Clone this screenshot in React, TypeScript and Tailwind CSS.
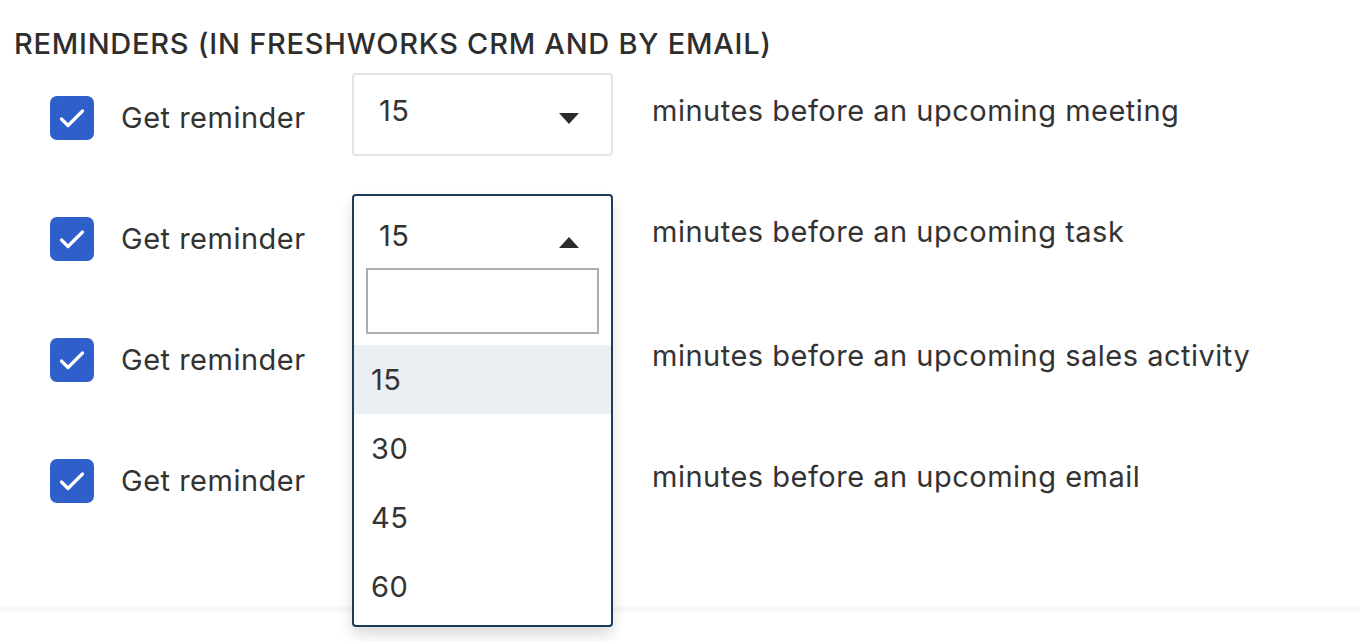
import React from 'react'

const rows = [
  { label: 'minutes before an upcoming meeting', open: false },
  { label: 'minutes before an upcoming task', open: true },
  { label: 'minutes before an upcoming sales activity', open: false },
  { label: 'minutes before an upcoming email', open: false },
]

const options = ['15', '30', '45', '60']

function Checkbox() {
  return (
    <div className="mt-[23px] flex h-[44px] w-[44px] shrink-0 items-center justify-center rounded-[7px] bg-[#2f5fcb]">
      <svg width="30" height="30" viewBox="0 0 30 30" fill="none">
        <path d="M4.5 16l6.5 6.5L25.5 8" stroke="#fff" strokeWidth="3.2" strokeLinecap="round" strokeLinejoin="round" />
      </svg>
    </div>
  )
}

function Caret({ up }: { up?: boolean }) {
  return (
    <svg width="20" height="12" viewBox="0 0 20 12" className="shrink-0">
      {up ? <path d="M0 12L10 1l10 11z" fill="#2b2b2b" /> : <path d="M0 0h20L10 11z" fill="#2b2b2b" />}
    </svg>
  )
}

function ClosedSelect() {
  return (
    <div className="flex h-[83px] w-[261px] shrink-0 items-start rounded-[4px] border-2 border-[#e4e4e4] bg-white pl-[25px] pr-[32px]">
      <span className="mt-[18px] flex-1 leading-[36px]">15</span>
      <div className="mt-[38px]">
        <Caret />
      </div>
    </div>
  )
}

function OpenSelect() {
  return (
    <div className="relative h-[83px] w-[261px] shrink-0">
      <div className="absolute left-0 top-0 z-10 w-[261px] overflow-hidden rounded-[4px] border-[2.5px] border-[#1d3b5b] bg-white shadow-[0_8px_14px_rgba(0,0,0,0.14)]">
        <div className="flex items-start pl-[25px] pr-[32px]">
          <span className="mt-[22px] flex-1 leading-[36px]">15</span>
          <div className="mt-[40px]">
            <Caret up />
          </div>
        </div>
        <div className="mx-[12px] mt-[14px] h-[66px] border-2 border-[#adadad] bg-white" />
        <div className="mt-[11px]">
          {options.map((o, i) => (
            <div
              key={o}
              className={`flex h-[69px] items-center pl-[17px] ${i === 0 ? 'bg-[#ebeef3]' : ''}`}
            >
              {o}
            </div>
          ))}
        </div>
        <div className="h-[4px]" />
      </div>
    </div>
  )
}

export default function App() {
  return (
    <div
      className="min-h-[641px] w-full overflow-hidden bg-white pt-[26px] text-[#333]"
      style={{ fontFamily: 'Inter, "Liberation Sans", sans-serif' }}
    >
      <h2 className="whitespace-nowrap pl-[14px] text-[29px] leading-[36px] font-medium tracking-[0.75px] text-[#2e2e2e]">
        REMINDERS (IN FRESHWORKS CRM AND BY EMAIL)
      </h2>

      <div className="mt-[11px] flex flex-col gap-[38px] text-[29px] tracking-[0.5px]">
        {rows.map((row, i) => (
          <div key={i} className="flex items-start pl-[50px]">
            <Checkbox />
            <span className="ml-[27px] mt-[27px] w-[231px] shrink-0 whitespace-nowrap leading-[36px]">Get reminder</span>
            {row.open ? <OpenSelect /> : <ClosedSelect />}
            <span className={`ml-[39px] whitespace-nowrap leading-[36px] ${i >= 2 ? 'mt-[23px]' : 'mt-[20px]'}`}>
              {row.label}
            </span>
          </div>
        ))}
      </div>

      <div className="mt-[86px] h-[8px] bg-gradient-to-b from-white via-[#f2f4f7] to-white" />
    </div>
  )
}
